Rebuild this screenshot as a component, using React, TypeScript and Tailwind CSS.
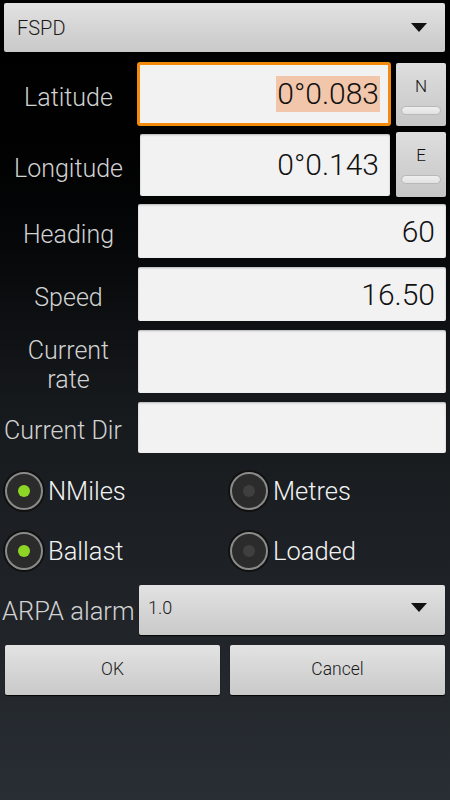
import React from "react";

/* ============ SMALL PIECES ============ */
const font = { fontFamily: "Roboto, 'Noto Sans', sans-serif" };

function Caret() {
  return (
    <svg width="16" height="9" viewBox="0 0 16 9" className="shrink-0">
      <path d="M0 0 L16 0 L8 9 Z" fill="#111" />
    </svg>
  );
}

function Spinner({ value, className, size }: { value: string; className: string; size: string }) {
  return (
    <div
      className={`flex items-center justify-between rounded-[2px] bg-gradient-to-b from-[#e2e2e2] to-[#c9c9c9] shadow-[0_1px_1px_rgba(0,0,0,0.9)] ${className}`}
    >
      <span className={`${size} font-light text-[#1a1a1a]`}>{value}</span>
      <Caret />
    </div>
  );
}

function Toggle({ letter, className }: { letter: string; className: string }) {
  return (
    <div
      className={`flex w-[50px] flex-col items-center rounded-[2px] bg-gradient-to-b from-[#dedede] to-[#c6c6c6] shadow-[0_1px_1px_rgba(0,0,0,0.9)] ${className}`}
    >
      <span className="mt-[15px] text-[17px] font-light leading-none text-[#111]">{letter}</span>
      <div className="mt-[11px] h-[9px] w-[40px] rounded-full border border-[#b8b8b8] bg-gradient-to-b from-[#eeeeee] to-[#e2e2e2]" />
    </div>
  );
}

function Radio({ label, on }: { label: string; on?: boolean }) {
  return (
    <div className="flex items-center">
      <div className="flex h-[38px] w-[38px] items-center justify-center rounded-full border-[2px] border-[#8a8a8a] bg-[#2b2b2b] shadow-[0_0_0_2px_#111]">
        <div
          className={`h-[12px] w-[12px] rounded-full ${
            on ? "bg-[#8ed626]" : "bg-[#3f3f3f]"
          }`}
        />
      </div>
      <span className="ml-[5px] text-[25.5px] font-light text-[#f2f2f2]">{label}</span>
    </div>
  );
}

/* ============ APP ============ */
export default function App() {
  const label =
    "w-[137px] shrink-0 pt-[7px] text-center text-[25px] font-light leading-[29px] text-[#d2d2d2]";
  const field =
    "flex items-center justify-end rounded-[2px] bg-[#f2f2f2] pr-[11px] text-[30px] font-light text-[#111] shadow-[inset_0_1px_2px_rgba(0,0,0,0.25)]";

  return (
    <div
      style={font}
      className="h-[800px] w-[450px] overflow-hidden bg-gradient-to-b from-[#000000] via-[#16191c] to-[#292e34]"
    >
      {/* top spinner */}
      <Spinner
        value="FSPD"
        size="text-[20px]"
        className="ml-[4px] mt-[3px] h-[49px] w-[441px] pl-[13px] pr-[18px]"
      />

      {/* Latitude */}
      <div className="mt-[10px] flex items-center">
        <div className={label}>Latitude</div>
        <div className="flex h-[64px] w-[254px] items-center justify-end rounded-[3px] border-[3px] border-[#f38a0c] bg-[#f2f2f2] pr-[8px] text-[30px] font-light text-[#111]">
          <span className="bg-[#f2c6ab] px-[1px] leading-[36px]">0°0.083</span>
        </div>
        <Toggle letter="N" className="ml-[5px] h-[63px]" />
      </div>

      {/* Longitude */}
      <div className="mt-[6px] flex items-center">
        <div className={label}>Longitude</div>
        <div className={`${field} ml-[3px] h-[62px] w-[250px]`}>0°0.143</div>
        <Toggle letter="E" className="ml-[6px] h-[65px]" />
      </div>

      {/* Heading */}
      <div className="mt-[7px] flex items-center">
        <div className={label}>Heading</div>
        <div className={`${field} ml-[1px] h-[54px] w-[308px]`}>60</div>
      </div>

      {/* Speed */}
      <div className="mt-[9px] flex items-center">
        <div className={label}>Speed</div>
        <div className={`${field} ml-[1px] h-[54px] w-[308px]`}>16.50</div>
      </div>

      {/* Current rate */}
      <div className="mt-[9px] flex h-[63px] items-center">
        <div className={label}>
          Current
          <br />
          rate
        </div>
        <div className={`${field} ml-[1px] h-[63px] w-[308px]`} />
      </div>

      {/* Current Dir */}
      <div className="mt-[9px] flex h-[51px] items-center">
        <div className="w-[137px] shrink-0 whitespace-nowrap pl-[4px] pt-[7px] text-[25px] font-light text-[#d2d2d2]">
          Current Dir
        </div>
        <div className={`${field} ml-[1px] h-[51px] w-[308px]`} />
      </div>

      {/* Radios */}
      <div className="mt-[19px] grid grid-cols-[225px_1fr] pl-[5px]">
        <Radio label="NMiles" on />
        <Radio label="Metres" />
      </div>
      <div className="mt-[22px] grid grid-cols-[225px_1fr] pl-[5px]">
        <Radio label="Ballast" on />
        <Radio label="Loaded" />
      </div>

      {/* ARPA alarm */}
      <div className="mt-[14px] flex h-[50px] items-center">
        <div className="w-[139px] shrink-0 whitespace-nowrap pl-[2px] pt-[4px] text-[25.5px] font-light text-[#d2d2d2]">
          ARPA alarm
        </div>
        <Spinner
          value="1.0"
          size="text-[18px]"
          className="h-[50px] w-[306px] pb-[4px] pl-[9px] pr-[18px]"
        />
      </div>

      {/* Buttons */}
      <div className="mt-[10px] flex gap-[10px] pl-[5px]">
        {["OK", "Cancel"].map((b) => (
          <button
            key={b}
            className="flex h-[50px] w-[215px] items-center justify-center rounded-[2px] bg-gradient-to-b from-[#e3e3e3] to-[#c9c9c9] text-[17.5px] font-light text-[#1a1a1a] shadow-[0_1px_1px_rgba(0,0,0,0.9)]"
          >
            {b}
          </button>
        ))}
      </div>
    </div>
  );
}
